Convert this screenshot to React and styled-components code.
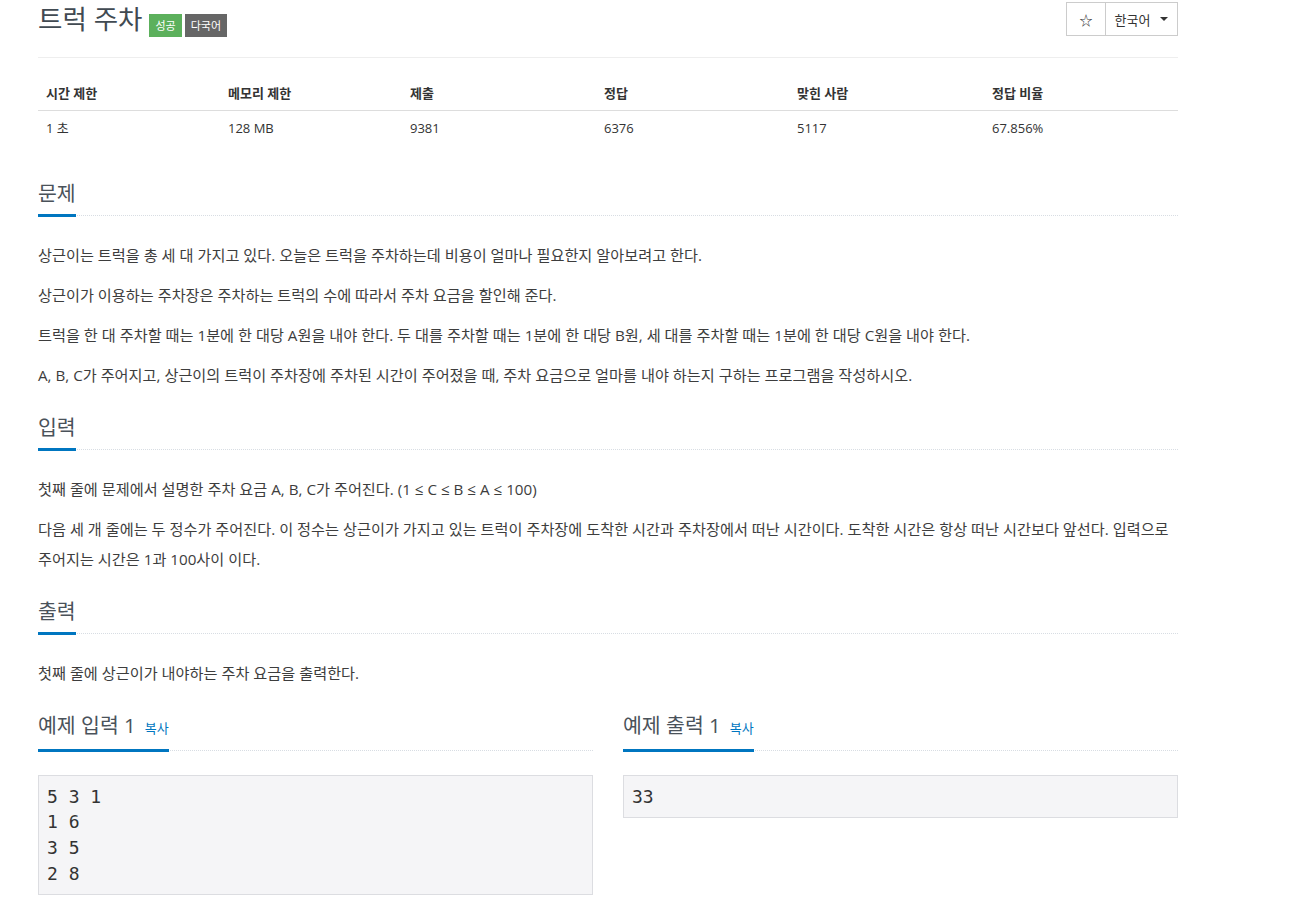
import React from 'react'
import styled, { createGlobalStyle } from 'styled-components'

const GlobalStyle = createGlobalStyle`
body {
    margin: 0;
    background: #fff;
    font-family: "Open Sans", "Noto Sans CJK KR", sans-serif;
    color: #555;
}
* { box-sizing: border-box; }
`;

const Container = styled.div`
width: 1140px;
margin-left: 38px;
`;

const HeaderRow = styled.div`
display: flex;
justify-content: space-between;
align-items: flex-start;
padding-top: 2px;
padding-bottom: 20px;
border-bottom: 1px solid #eee;
`;

const Title = styled.h1`
display: flex;
align-items: flex-start;
margin: 0;
font-size: 26.5px;
line-height: 34px;
font-weight: 400;
color: #414a52;
`;

const Badge = styled.span`
display: inline-block;
margin-top: 12px;
margin-left: ${(props) => props.first ? "7px" : "3px"};
padding: 0 6px;
height: 23px;
line-height: 23px;
font-size: 11px;
color: #fff;
background: ${(props) => props.color};
`;

const BtnGroup = styled.div`
display: flex;
border: 1px solid #ccc;
height: 34px;
`;

const Btn = styled.div`
display: flex;
align-items: center;
justify-content: center;
width: ${(props) => props.w};
font-size: 13px;
color: #333;
& + & { border-left: 1px solid #ccc; }
`;

const Caret = styled.span`
display: inline-block;
margin-left: 10px;
width: 0;
height: 0;
border-left: 4px solid transparent;
border-right: 4px solid transparent;
border-top: 4px solid #333;
`;

const Table = styled.table`
width: 100%;
margin-top: 18px;
margin-bottom: 33px;
border-collapse: collapse;
font-size: 13px;
line-height: 18px;
color: #333;
th, td {
    text-align: left;
    padding: 8px;
}
th {
    font-weight: 700;
    border-bottom: 1px solid #ddd;
}
`;

const Section = styled.section`
margin-bottom: 22px;
`;

const Headline = styled.div`
display: flex;
border-bottom: 1px dotted #d8dde3;
margin-bottom: 24px;
`;

const HeadText = styled.h2`
margin: 0 0 -2px 0;
padding-bottom: 6px;
font-size: 20.5px;
line-height: 30px;
font-weight: 400;
color: #4a525a;
border-bottom: 3px solid #0076c0;
`;

const Copy = styled.span`
margin-left: 9px;
font-size: 13px;
color: #0076c0;
`;

const Para = styled.p`
margin: 0 0 10px 0;
font-size: 15.2px;
line-height: 30px;
color: #3d3d3d;
word-break: keep-all;
`;

const SampleRow = styled.div`
display: grid;
grid-template-columns: 1fr 1fr;
gap: 30px;
`;

const Pre = styled.pre`
margin: 0;
padding: 7.5px 8px;
font-family: "DejaVu Sans Mono", monospace;
font-size: 18px;
line-height: 25.7px;
color: #333;
background: #f5f5f7;
border: 1px solid #dcdde1;
`;

const stats = [
    ['시간 제한', '1 초', 182],
    ['메모리 제한', '128 MB', 182],
    ['제출', '9381', 194],
    ['정답', '6376', 193],
    ['맞힌 사람', '5117', 195],
    ['정답 비율', '67.856%', 194],
];

const Sample = ({title, data}) => (
    <Section>
        <Headline>
            <HeadText>{title}<Copy>복사</Copy></HeadText>
        </Headline>
        <Pre>{data}</Pre>
    </Section>
);

export default function App() {
    return (
        <Container>
            <GlobalStyle />
            <HeaderRow>
                <Title>
                    트럭 주차
                    <Badge first color="#5cb05c">성공</Badge>
                    <Badge color="#666">다국어</Badge>
                </Title>
                <BtnGroup>
                    <Btn w="38px">☆</Btn>
                    <Btn w="72px">한국어<Caret /></Btn>
                </BtnGroup>
            </HeaderRow>

            <Table>
                <thead>
                    <tr>
                        {stats.map(([h, , w]) => <th key={h} style={{width: w}}>{h}</th>)}
                    </tr>
                </thead>
                <tbody>
                    <tr>
                        {stats.map(([h, v]) => <td key={h}>{v}</td>)}
                    </tr>
                </tbody>
            </Table>

            <Section>
                <Headline><HeadText>문제</HeadText></Headline>
                <Para>상근이는 트럭을 총 세 대 가지고 있다. 오늘은 트럭을 주차하는데 비용이 얼마나 필요한지 알아보려고 한다.</Para>
                <Para>상근이가 이용하는 주차장은 주차하는 트럭의 수에 따라서 주차 요금을 할인해 준다.</Para>
                <Para>트럭을 한 대 주차할 때는 1분에 한 대당 A원을 내야 한다. 두 대를 주차할 때는 1분에 한 대당 B원, 세 대를 주차할 때는 1분에 한 대당 C원을 내야 한다.</Para>
                <Para>A, B, C가 주어지고, 상근이의 트럭이 주차장에 주차된 시간이 주어졌을 때, 주차 요금으로 얼마를 내야 하는지 구하는 프로그램을 작성하시오.</Para>
            </Section>

            <Section>
                <Headline><HeadText>입력</HeadText></Headline>
                <Para>첫째 줄에 문제에서 설명한 주차 요금 A, B, C가 주어진다. (1 ≤ C ≤ B ≤ A ≤ 100)</Para>
                <Para>다음 세 개 줄에는 두 정수가 주어진다. 이 정수는 상근이가 가지고 있는 트럭이 주차장에 도착한 시간과 주차장에서 떠난 시간이다. 도착한 시간은 항상 떠난 시간보다 앞선다. 입력으로 주어지는 시간은 1과 100사이 이다.</Para>
            </Section>

            <Section>
                <Headline><HeadText>출력</HeadText></Headline>
                <Para>첫째 줄에 상근이가 내야하는 주차 요금을 출력한다.</Para>
            </Section>

            <SampleRow>
                <Sample title="예제 입력 1" data={"5 3 1\n1 6\n3 5\n2 8"} />
                <Sample title="예제 출력 1" data={"33"} />
            </SampleRow>
        </Container>
    )
}
